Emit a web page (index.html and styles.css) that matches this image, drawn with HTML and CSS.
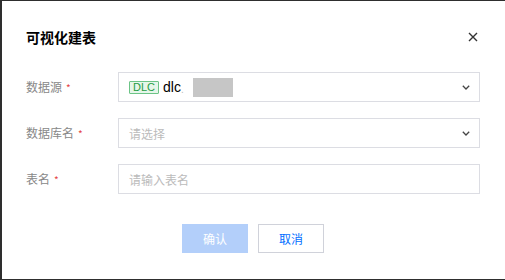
FILE: index.html
```html
<!DOCTYPE html>
<html lang="zh">
<head>
<meta charset="utf-8">
<link rel="stylesheet" href="styles.css">
</head>
<body>
<div class="dialog">
  <div class="header">
    <div class="title">可视化建表</div>
    <button class="close" aria-label="关闭">
      <svg width="10" height="10" viewBox="0 0 10 10"><path d="M1 1L9 9M9 1L1 9" stroke="#333" stroke-width="1.4" fill="none"/></svg>
    </button>
  </div>
  <div class="form">
    <div class="row">
      <div class="label">数据源<span class="req">*</span></div>
      <div class="field select">
        <div class="value"><span class="tag">DLC</span><span class="text">dlc</span><span class="dot">.</span><span class="mask"></span></div>
        <svg class="chev" width="8" height="5" viewBox="0 0 8 5"><path d="M0.8 0.8L4 4L7.2 0.8" stroke="#444" stroke-width="1.3" fill="none"/></svg>
      </div>
    </div>
    <div class="row">
      <div class="label">数据库名<span class="req">*</span></div>
      <div class="field select">
        <div class="placeholder">请选择</div>
        <svg class="chev" width="8" height="5" viewBox="0 0 8 5"><path d="M0.8 0.8L4 4L7.2 0.8" stroke="#444" stroke-width="1.3" fill="none"/></svg>
      </div>
    </div>
    <div class="row">
      <div class="label">表名<span class="req">*</span></div>
      <div class="field">
        <div class="placeholder">请输入表名</div>
      </div>
    </div>
  </div>
  <div class="footer">
    <button class="btn primary">确认</button>
    <button class="btn">取消</button>
  </div>
</div>
</body>
</html>
```
FILE: styles.css
```css
html, body {
  margin: 0;
  padding: 0;
}
body {
  background: #2e2e2e;
  width: 505px;
  height: 280px;
  padding: 1px 0 1px 2px;
  box-sizing: border-box;
  font-family: "Noto Sans CJK SC", "Liberation Sans", sans-serif;
  overflow: hidden;
}
.dialog {
  background: #fff;
  height: 278px;
  box-sizing: border-box;
  padding: 26px 25px 0 24px;
  display: flex;
  flex-direction: column;
}
.header {
  display: flex;
  align-items: center;
  justify-content: space-between;
  height: 20px;
}
.title {
  font-size: 14px;
  font-weight: bold;
  color: #000;
  line-height: 20px;
}
.close {
  border: 0;
  background: none;
  padding: 0;
  margin-right: 2px;
  width: 10px;
  height: 10px;
  display: flex;
}
.form {
  margin-top: 25px;
  display: flex;
  flex-direction: column;
  gap: 16px;
}
.row {
  display: flex;
  align-items: center;
  height: 30px;
}
.label {
  width: 92px;
  flex: none;
  font-size: 12px;
  color: #888;
  line-height: 18px;
}
.req {
  color: #e54545;
  margin-left: 4px;
  font-size: 10px;
}
.field {
  flex: 1;
  height: 30px;
  box-sizing: border-box;
  border: 1px solid #dcdde3;
  display: flex;
  align-items: center;
  justify-content: space-between;
  padding: 0 9px 0 10px;
}
.placeholder {
  font-size: 12px;
  color: #bbb;
}
.value {
  display: flex;
  align-items: center;
}
.tag {
  font-family: "Liberation Sans", sans-serif;
  font-size: 11px;
  line-height: 11px;
  color: #1f9c42;
  background: #e6f6ea;
  border: 1px solid #6cc486;
  padding: 0 3px;
  border-radius: 1px;
}
.text {
  font-family: "Liberation Sans", sans-serif;
  font-size: 14px;
  color: #000;
  margin-left: 4px;
}
.dot {
  font-family: "Liberation Sans", sans-serif;
  font-size: 10px;
  color: #bbb;
  margin-top: 4px;
}
.mask {
  width: 40px;
  height: 19px;
  background: #c6c6c6;
  margin-left: 9px;
}
.chev {
  display: block;
}
.footer {
  margin-top: 30px;
  display: flex;
  justify-content: center;
  gap: 10px;
}
.btn {
  width: 66px;
  height: 29px;
  box-sizing: border-box;
  border: 1px solid #d0d2da;
  background: #fff;
  color: #006eff;
  font-family: "Noto Sans CJK SC", sans-serif;
  font-size: 12px;
  padding: 0;
}
.btn.primary {
  background: #b3cffa;
  border-color: #b3cffa;
  color: #fff;
}
```
